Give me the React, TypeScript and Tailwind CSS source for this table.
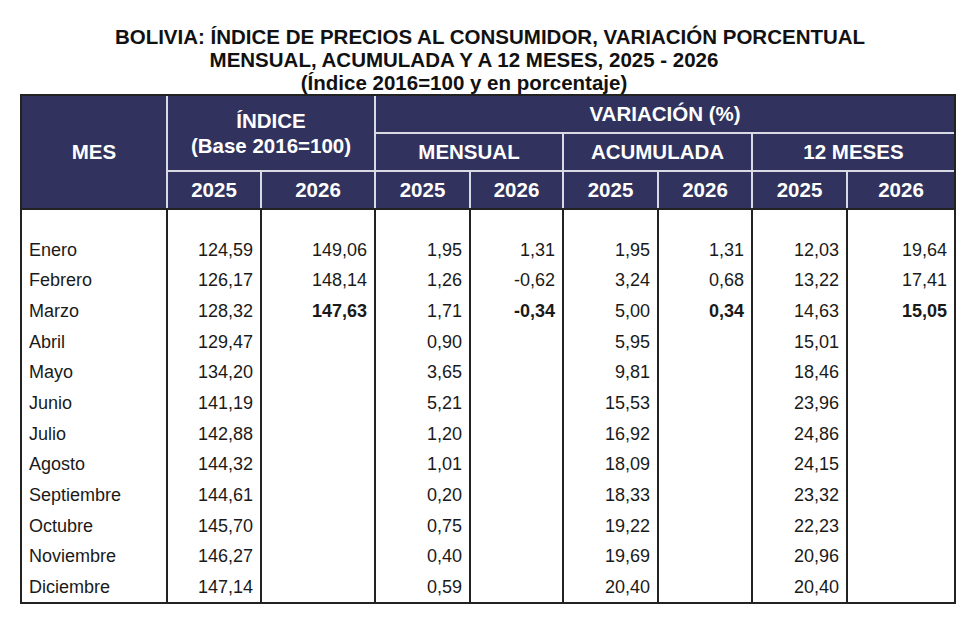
import React from "react";

type Row = { mes: string; v: string[]; bold?: boolean[] };

const rows: Row[] = [
    { mes: "Enero", v: ["124,59", "149,06", "1,95", "1,31", "1,95", "1,31", "12,03", "19,64"] },
    { mes: "Febrero", v: ["126,17", "148,14", "1,26", "-0,62", "3,24", "0,68", "13,22", "17,41"] },
    {
        mes: "Marzo",
        v: ["128,32", "147,63", "1,71", "-0,34", "5,00", "0,34", "14,63", "15,05"],
        bold: [false, true, false, true, false, true, false, true],
    },
    { mes: "Abril", v: ["129,47", "", "0,90", "", "5,95", "", "15,01", ""] },
    { mes: "Mayo", v: ["134,20", "", "3,65", "", "9,81", "", "18,46", ""] },
    { mes: "Junio", v: ["141,19", "", "5,21", "", "15,53", "", "23,96", ""] },
    { mes: "Julio", v: ["142,88", "", "1,20", "", "16,92", "", "24,86", ""] },
    { mes: "Agosto", v: ["144,32", "", "1,01", "", "18,09", "", "24,15", ""] },
    { mes: "Septiembre", v: ["144,61", "", "0,20", "", "18,33", "", "23,32", ""] },
    { mes: "Octubre", v: ["145,70", "", "0,75", "", "19,22", "", "22,23", ""] },
    { mes: "Noviembre", v: ["146,27", "", "0,40", "", "19,69", "", "20,96", ""] },
    { mes: "Diciembre", v: ["147,14", "", "0,59", "", "20,40", "", "20,40", ""] },
];

const cols = "grid grid-cols-[144px_92px_112px_93px_91px_93px_92px_93px_106px]";
const head = "bg-[#31335e] text-white font-bold text-[20.5px] flex items-center justify-center";

const App = () => {
    return (
        <div className="w-[980px] h-[632px] bg-white font-['Liberation_Sans',Arial,sans-serif] text-[#1a1a1a]">
            <div className="pt-[25px] text-center font-bold text-[20.5px] leading-[23px] text-[#111]">
                <p>BOLIVIA: ÍNDICE DE PRECIOS AL CONSUMIDOR, VARIACIÓN PORCENTUAL</p>
                <p className="pr-[52px]">MENSUAL, ACUMULADA Y A 12 MESES, 2025 - 2026</p>
                <p className="pr-[52px]">(Índice 2016=100 y en porcentaje)</p>
            </div>

            <div className="ml-[20px] w-[936px] border-2 border-[#222]">
                {/* header */}
                <div className={`${cols} grid-rows-[36px_36px_36px] gap-[2px] bg-[#d9dae3]`}>
                    <div className={`${head} row-span-3`}>MES</div>
                    <div className={`${head} col-span-2 row-span-2 flex-col leading-[25px]`}>
                        <p>ÍNDICE</p>
                        <p>(Base 2016=100)</p>
                    </div>
                    <div className={`${head} col-span-6`}>VARIACIÓN (%)</div>
                    <div className={`${head} col-span-2`}>MENSUAL</div>
                    <div className={`${head} col-span-2`}>ACUMULADA</div>
                    <div className={`${head} col-span-2`}>12 MESES</div>
                    {["2025", "2026", "2025", "2026", "2025", "2026", "2025", "2026"].map((y, i) =>
                        <div key={i} className={head}>{y}</div>
                    )}
                </div>

                {/* body */}
                <div className={`${cols} gap-x-[2px] bg-[#222] border-t-2 border-[#222] text-[18px]`}>
                    {Array.from({ length: 9 }).map((_, i) =>
                        <div key={"s" + i} className="bg-white h-[24px]" />
                    )}
                    {rows.map((r) =>
                        <React.Fragment key={r.mes}>
                            <div className="bg-white h-[30.67px] flex items-center pl-[7px] pt-[2px]">{r.mes}</div>
                            {r.v.map((val, j) =>
                                <div key={j}
                                     className={`bg-white h-[30.67px] flex items-center justify-end pr-[7px] pt-[2px] ${r.bold && r.bold[j] ? "font-bold" : ""}`}>
                                    {val}
                                </div>
                            )}
                        </React.Fragment>
                    )}
                </div>
            </div>
        </div>
    );
};

export default App;
